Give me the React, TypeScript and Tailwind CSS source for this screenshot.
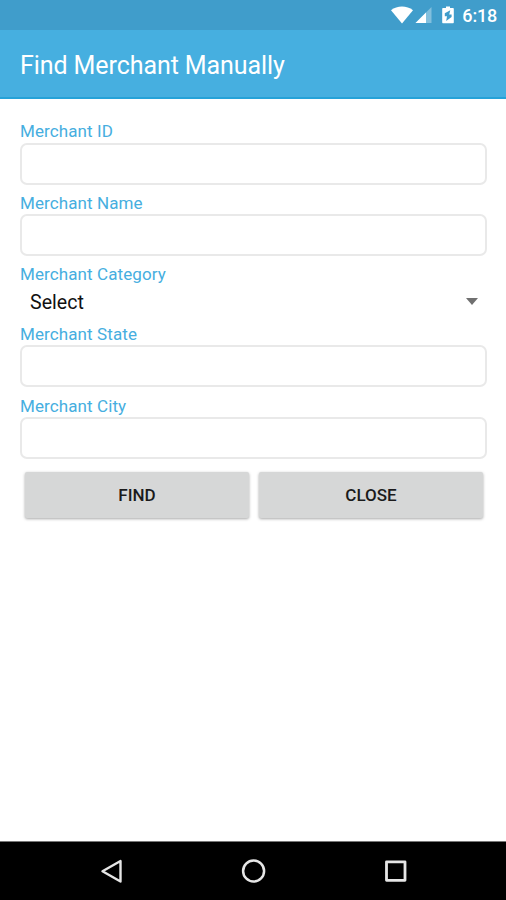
import { useState } from 'react';

interface TextFieldProps {
  label: string;
  value: string;
  onChange: (value: string) => void;
}

function FieldLabel({ text }: { text: string }) {
  return <span className="block h-[23.5px] text-[17px] leading-6 tracking-[0.1px] text-[#46aee0]">{text}</span>;
}

function TextField({ label, value, onChange }: TextFieldProps) {
  return (
    <label className="block h-[71.7px]">
      <FieldLabel text={label} />
      <input
        value={value}
        onChange={(e) => onChange(e.target.value)}
        className="block h-[42px] w-full rounded-[7px] border-2 border-[#e9e9e9] bg-white px-2.5 text-lg outline-none"
      />
    </label>
  );
}

function StatusBar() {
  return (
    <div className="flex h-[30px] shrink-0 items-center justify-end bg-[#409dcb] pr-[9px] text-white">
      {/* Wifi */}
      <svg width="22" height="18" viewBox="0 0 22 18" fill="currentColor">
        <path d="M0 4.2C6.2-.7 15.8-.7 22 4.2L11 17.5z" />
      </svg>
      {/* Cell signal */}
      <svg width="18" height="18" viewBox="0 0 18 18" className="ml-px" fill="currentColor">
        <path d="M17.5 1v16H1.5z" opacity="0.35" />
        <path d="M12 6.5V17H1.5z" />
      </svg>
      {/* Battery charging */}
      <svg width="12" height="18" viewBox="0 0 12 18" className="ml-[10px]" fill="currentColor">
        <path
          fillRule="evenodd"
          d="M4 0.5h4v1.6h2.8c.6 0 1 .4 1 1v13.2c0 .6-.4 1-1 1H1.2c-.6 0-1-.4-1-1V3.1c0-.6.4-1 1-1H4zM8.300 4.200L2.800 7.300V10.200H5L4.200 15L9.600 11V8.400H7.200z"
        />
      </svg>
      <span className="ml-2 pt-0.5 text-[18px] leading-[28px] font-medium tracking-[-0.2px]">6:18</span>
    </div>
  );
}

function NavigationBar() {
  return (
    <div className="flex h-[59px] shrink-0 items-center justify-between border-t border-[#777] bg-black pr-[97px] pl-[98px] text-[#e6e6e6]">
      <svg width="28" height="28" viewBox="0 0 28 28" fill="none" stroke="currentColor" strokeWidth="2.4" strokeLinejoin="round">
        <path d="M22.5 4v20.5L4.5 14.25z" />
      </svg>
      <svg width="28" height="28" viewBox="0 0 28 28" fill="none" stroke="currentColor" strokeWidth="2.5">
        <circle cx="13.6" cy="14" r="10.5" />
      </svg>
      <svg width="28" height="28" viewBox="0 0 28 28" fill="none" stroke="currentColor" strokeWidth="2.8" strokeLinejoin="round">
        <rect x="5.5" y="4.8" width="18.5" height="18.5" />
      </svg>
    </div>
  );
}

export default function App() {
  const [merchantId, setMerchantId] = useState('');
  const [name, setName] = useState('');
  const [state, setState] = useState('');
  const [city, setCity] = useState('');

  const buttonClass =
    'h-[46px] flex-1 rounded-[2px] bg-[#d6d7d7] text-[17px] font-medium text-[#1b1b1b] shadow-[0_1px_3px_rgba(0,0,0,0.35)]';

  return (
    <div className="flex h-[900px] w-full flex-col overflow-hidden bg-white font-['Roboto',sans-serif]">
      <StatusBar />

      <header className="flex h-[69px] shrink-0 items-center border-b-2 border-[#25a2d8] bg-[#46afe0] px-5 pt-[5px]">
        <h1 className="text-[25px] tracking-[-0.08px] text-white">Find Merchant Manually</h1>
      </header>

      <main className="flex-1 pt-5 pr-[19px] pl-5">
        <TextField label="Merchant ID" value={merchantId} onChange={setMerchantId} />
        <TextField label="Merchant Name" value={name} onChange={setName} />

        {/* Category spinner */}
        <div className="h-[59.6px]">
          <FieldLabel text="Merchant Category" />
          <button className="flex h-[31px] w-full items-center justify-between pt-0.5 pr-[9px] pl-2.5 text-[19.6px] text-[#111]">
            Select
            <svg width="12" height="7" viewBox="0 0 12 7" className="-mt-0.5" fill="#707070">
              <path d="M0 0h12L6 7z" />
            </svg>
          </button>
        </div>

        <TextField label="Merchant State" value={state} onChange={setState} />
        <TextField label="Merchant City" value={city} onChange={setCity} />

        <div className="flex gap-2.5 pt-[7px] pr-1 pl-[5px]">
          <button className={buttonClass}>FIND</button>
          <button className={buttonClass}>CLOSE</button>
        </div>
      </main>

      <NavigationBar />
    </div>
  );
}
